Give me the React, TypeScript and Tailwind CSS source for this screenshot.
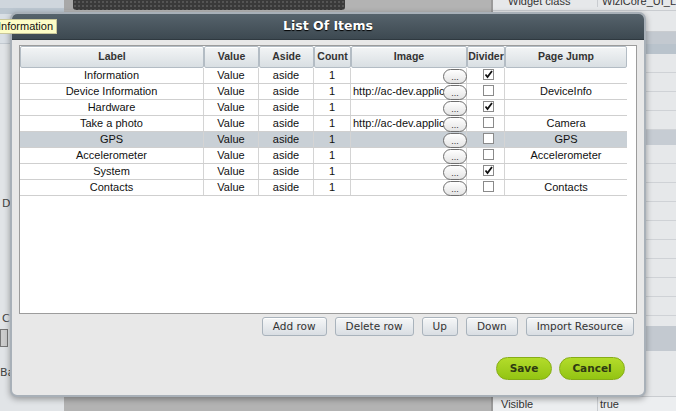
import React from "react";

type Row = { label: string; image: string; divider: boolean; jump: string; selected?: boolean };

const rows: Row[] = [
  { label: "Information", image: "", divider: true, jump: "" },
  { label: "Device Information", image: "http://ac-dev.applica", divider: false, jump: "DeviceInfo" },
  { label: "Hardware", image: "", divider: true, jump: "" },
  { label: "Take a photo", image: "http://ac-dev.applica", divider: false, jump: "Camera" },
  { label: "GPS", image: "", divider: false, jump: "GPS", selected: true },
  { label: "Accelerometer", image: "", divider: false, jump: "Accelerometer" },
  { label: "System", image: "", divider: true, jump: "" },
  { label: "Contacts", image: "", divider: false, jump: "Contacts" },
];

const cols = [
  { name: "Label", w: "w-[184px]" },
  { name: "Value", w: "w-[55px]" },
  { name: "Aside", w: "w-[55px]" },
  { name: "Count", w: "w-[37px]" },
  { name: "Image", w: "w-[116px]" },
  { name: "Divider", w: "w-[38px]" },
  { name: "Page Jump", w: "w-[122px]" },
];

function Check({ on }: { on: boolean }) {
  return (
    <div className="w-[11px] h-[11px] border border-[#8a8a8a] bg-white flex items-center justify-center">
      {on && (
        <svg width="9" height="9" viewBox="0 0 9 9">
          <path d="M1.5 4.5 L3.5 7 L8 1" stroke="#111" strokeWidth="1.8" fill="none" />
        </svg>
      )}
    </div>
  );
}

function Btn({ children }: { children: React.ReactNode }) {
  return (
    <div className="h-[19px] px-[10px] flex items-center rounded-[3px] border border-[#a9b3bc] bg-gradient-to-b from-[#f6f7f8] to-[#d9dee3] text-[10.5px] text-[#333] shadow-[inset_0_1px_0_#fff]">
      {children}
    </div>
  );
}

function GreenBtn({ children, w }: { children: React.ReactNode; w: string }) {
  return (
    <div className={`${w} h-[23px] flex items-center justify-center rounded-full border border-[#86ad16] bg-gradient-to-b from-[#b3dc2a] to-[#93c412] text-[10.5px] font-bold text-[#2f3a12]`}>
      {children}
    </div>
  );
}

export default function App() {
  return (
    <div className="relative w-[676px] h-[411px] overflow-hidden bg-[#b3b3b3] font-['DejaVu_Sans',sans-serif]">
      {/* background app */}
      <div className="flex h-full">
        <div className="w-[65px] h-full bg-[#e1e4e7] flex flex-col text-[11px] text-[#444]">
          <div className="h-[8px] bg-[#cfd6dd]" />
          <div className="h-[6px] bg-[#bcc7d1]" />
          <div className="h-[30px] bg-[#d9dfe5] border-b border-[#c3cad1]" />
          <div className="h-[152px]" />
          <div className="pl-[2px]">D</div>
          <div className="h-[98px]" />
          <div className="pl-[2px]">C</div>
          <div className="h-[2px]" />
          <div className="w-[8px] h-[18px] border border-[#777] bg-[#ccc]" />
          <div className="mt-[18px]">Ba</div>
        </div>
        <div className="w-[435px] h-full flex flex-col">
          <div className="flex h-[10px]">
            <div className="w-[9px] bg-[#a8a8a8]" />
            <div className="w-[272px] bg-[#3a3a3a] bg-[radial-gradient(#555_1px,transparent_1px)] bg-[length:4px_4px] rounded-b-[3px]" />
          </div>
          <div className="flex-1" />
        </div>
        <div className="flex-1 h-full bg-[#e6e8ea] border-l-2 border-[#9a9a9a] flex flex-col text-[11px] text-[#333] font-['Liberation_Sans',sans-serif]">
          <div className="h-[11px] flex items-end border-b border-[#c9ccd0]">
            <div className="w-[104px] pl-[15px] leading-[11px] mb-[3px]">Widget class</div>
            <div className="pl-[4px] border-l border-[#c9ccd0] leading-[11px] mb-[3px]">WiziCore_UI_L</div>
          </div>
          <div className="h-[21px] pl-[108px] pt-[3px] border-b border-[#c9ccd0]">st</div>
          <div className="h-[12px] bg-[#c3c9d0]" />
          <div className="h-[10px] bg-[#b9c3cc]" />
          <div className="h-[19px] border-b border-[#cfd2d6]" />
          <div className="h-[19px] border-b border-[#cfd2d6]" />
          <div className="h-[19px] border-b border-[#cfd2d6]" />
          <div className="h-[19px] border-b border-[#cfd2d6]" />
          <div className="h-[15px] bg-[#c6ccd3]" />
          <div className="h-[19px] border-b border-[#cfd2d6]" />
          <div className="h-[19px] border-b border-[#cfd2d6]" />
          <div className="h-[19px] border-b border-[#cfd2d6]" />
          <div className="h-[19px] border-b border-[#cfd2d6]" />
          <div className="h-[19px] border-b border-[#cfd2d6]" />
          <div className="h-[19px] border-b border-[#cfd2d6]" />
          <div className="h-[19px] border-b border-[#cfd2d6]" />
          <div className="h-[19px] border-b border-[#cfd2d6]" />
          <div className="h-[19px] border-b border-[#cfd2d6]" />
          <div className="h-[10px]" />
          <div className="h-[25px] bg-[#c3c9d0]" />
          <div className="flex-1" />
          <div className="flex h-[15px] items-center border-t border-[#c9ccd0] bg-[#eceef0]">
            <div className="w-[105px] pl-[8px] h-full flex items-center border-r border-[#c9ccd0]">Visible</div>
            <div className="pl-[2px]">true</div>
          </div>
        </div>
      </div>

      {/* dialog */}
      <div className="absolute left-[10px] top-[12px] w-[636px] h-[385px] rounded-[7px] border-2 border-[#a8b0b8] bg-[#e8e8e8] shadow-[0_2px_6px_rgba(0,0,0,0.35)] overflow-hidden flex flex-col">
        <div className="h-[26px] shrink-0 bg-gradient-to-b from-[#56636c] to-[#3d4951] flex items-center justify-center border-b border-[#2f3940]">
          <span className="text-[12.5px] font-bold text-white [text-shadow:0_1px_1px_#000]">List Of Items</span>
        </div>
        <div className="px-[7px] pt-[5px] flex flex-col">
          <div className="h-[269px] bg-white border border-[#9c9c9c] font-['Liberation_Sans',sans-serif] text-[11px] text-[#111]">
            <div className="flex h-[22px]">
              {cols.map((c) => (
                <div
                  key={c.name}
                  className={`${c.w} h-full flex items-center justify-center border border-[#b3bcc4] rounded-[2px] bg-gradient-to-b from-[#f3f5f6] to-[#d9dfe3] shadow-[inset_0_1px_0_#fff] text-[10.5px] font-bold text-[#333]`}
                >
                  {c.name}
                </div>
              ))}
            </div>
            {rows.map((r) => (
              <div
                key={r.label}
                className={`flex h-[16px] w-[607px] border-b border-[#cfcfcf] ${r.selected ? "bg-[#c9d0d6]" : "bg-white"}`}
              >
                <div className="w-[184px] flex items-center justify-center border-r border-[#d4d4d4]">{r.label}</div>
                <div className="w-[55px] flex items-center justify-center border-r border-[#d4d4d4]">Value</div>
                <div className="w-[55px] flex items-center justify-center border-r border-[#d4d4d4]">aside</div>
                <div className="w-[37px] flex items-center justify-center border-r border-[#d4d4d4]">1</div>
                <div className="w-[116px] relative flex items-center border-r border-[#d4d4d4] pl-[2px]">
                  <span className="whitespace-nowrap overflow-hidden w-[100px]">{r.image}</span>
                  <div className="absolute right-[-1px] top-[1px] w-[24px] h-[15px] rounded-full border border-[#6f6f6f] bg-gradient-to-b from-white to-[#e4e4e4] flex items-end justify-center text-[9px] leading-[11px] text-[#333]">
                    ...
                  </div>
                </div>
                <div className="w-[38px] flex items-start justify-center pt-[1px] pl-[5px] border-r border-[#d4d4d4]">
                  <Check on={r.divider} />
                </div>
                <div className="w-[122px] flex items-center justify-center">{r.jump}</div>
              </div>
            ))}
          </div>
          <div className="flex justify-end gap-[8px] pr-[3px] mt-[3px]">
            <Btn>Add row</Btn>
            <Btn>Delete row</Btn>
            <Btn>Up</Btn>
            <Btn>Down</Btn>
            <Btn>Import Resource</Btn>
          </div>
          <div className="flex justify-end gap-[7px] pr-[12px] mt-[21px]">
            <GreenBtn w="w-[56px]">Save</GreenBtn>
            <GreenBtn w="w-[66px]">Cancel</GreenBtn>
          </div>
        </div>
      </div>

      {/* tooltip */}
      <div className="absolute left-[-4px] top-[19px] h-[15px] pl-[1px] pr-[3px] bg-[#fdfdc6] border border-[#c9c79a] flex items-center text-[11px] text-[#111] font-['Liberation_Sans',sans-serif]">
        Information
      </div>
    </div>
  );
}
